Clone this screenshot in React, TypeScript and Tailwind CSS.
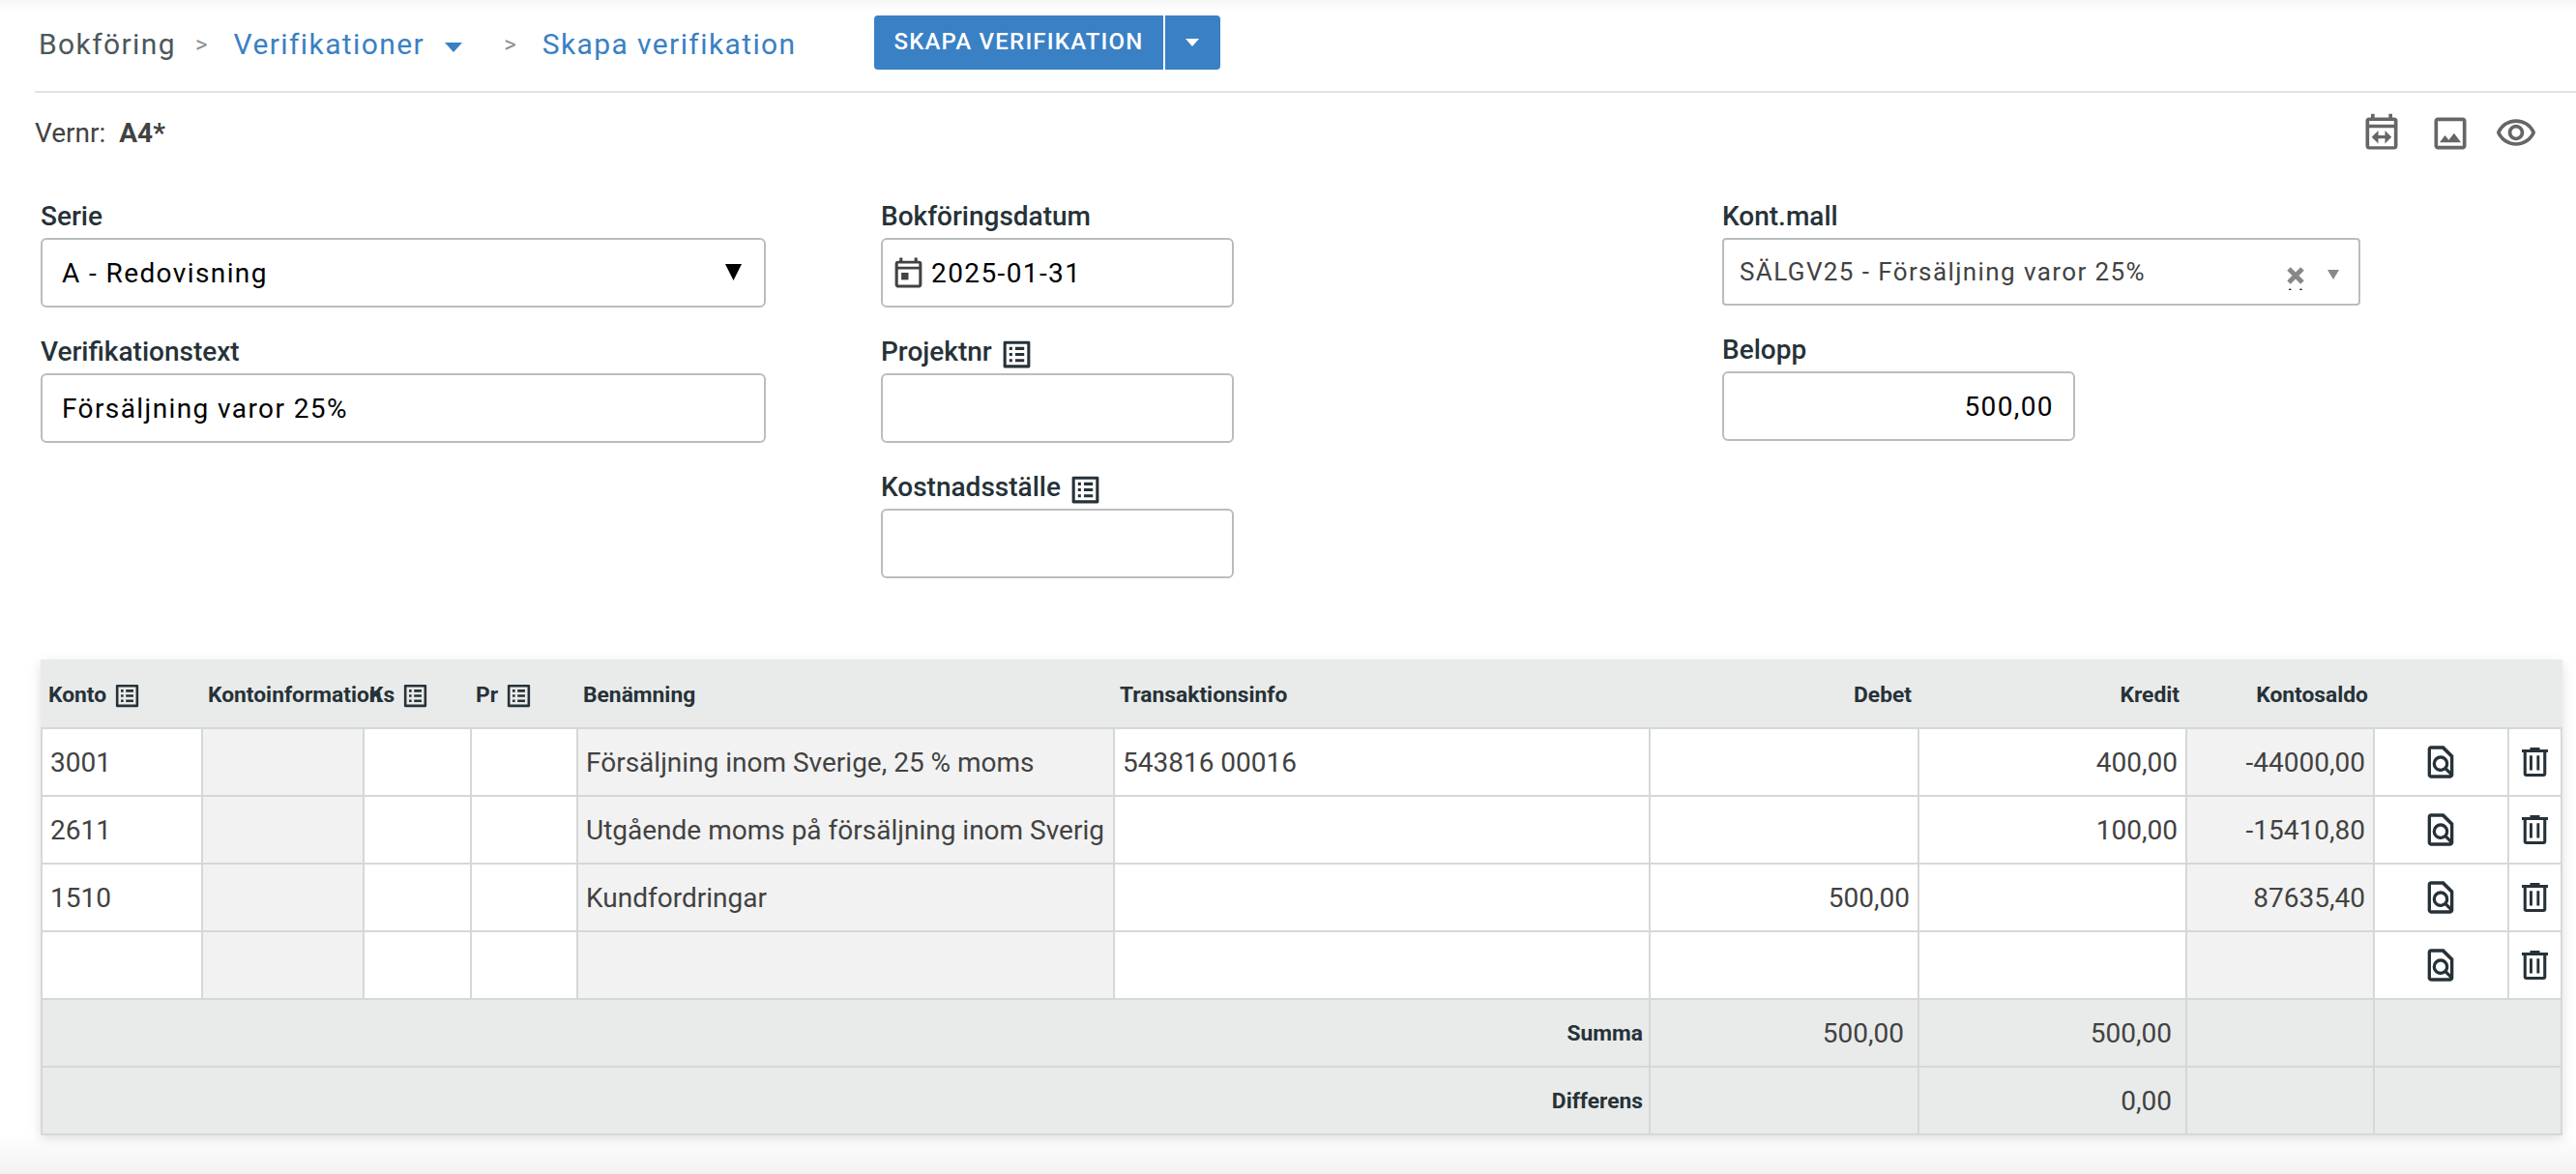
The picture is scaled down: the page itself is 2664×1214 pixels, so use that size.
import { type ReactNode } from "react";
import { MdOutlineFindInPage, MdOutlineImage, MdOutlineListAlt, MdOutlineVisibility } from "react-icons/md";

type Row = {
  konto: string;
  name: string;
  info: string;
  debet: string;
  kredit: string;
  saldo: string;
};

const rows: Row[] = [
  { konto: "3001", name: "Försäljning inom Sverige, 25 % moms", info: "543816 00016", debet: "", kredit: "400,00", saldo: "-44000,00" },
  { konto: "2611", name: "Utgående moms på försäljning inom Sverig", info: "", debet: "", kredit: "100,00", saldo: "-15410,80" },
  { konto: "1510", name: "Kundfordringar", info: "", debet: "500,00", kredit: "", saldo: "87635,40" },
  { konto: "", name: "", info: "", debet: "", kredit: "", saldo: "" },
];

const columns = "grid grid-cols-[168px_167px_111px_110px_555px_554px_278px_277px_194px_139px_55px]";

function CalendarIcon({ range = false, className }: { range?: boolean; className?: string }) {
  return (
    <svg viewBox="0 0 24 24" fill="currentColor" fillRule="evenodd" className={className}>
      <path d="M18 3V1h-2v2H8V1H6v2H5a2 2 0 0 0-2 2v14a2 2 0 0 0 2 2h14a2 2 0 0 0 2-2V5a2 2 0 0 0-2-2ZM5 4.900h14v2H5ZM5 8.800h14V19.200H5Z" />
      {range ? (
        <path d="M6.400 14l3.700-3.700v2.800h3.800v-2.800l3.700 3.700-3.700 3.700v-2.800h-3.800v2.800Z" />
      ) : (
        <path d="M7.200 11H12v4.800H7.200z" />
      )}
    </svg>
  );
}

function TrashIcon({ className }: { className?: string }) {
  return (
    <svg viewBox="0 0 27 30" fill="currentColor" fillRule="evenodd" className={className}>
      <path d="M8.500 0h10v2H27v3h-1.700v22a3 3 0 0 1-3 3H4.700a3 3 0 0 1-3-3V5H0V2h8.500ZM4.800 5v22h17.400V5Z" />
      <path d="M8 8.200h2.900v15.300H8zM15.400 8.200h2.900v15.300h-2.900z" />
    </svg>
  );
}

function Caret({ className }: { className?: string }) {
  return (
    <svg viewBox="0 0 10 6" preserveAspectRatio="none" fill="currentColor" className={className}>
      <path d="M0 0h10L5 6z" />
    </svg>
  );
}

function Field({ label, list, children }: { label: string; list?: boolean; children: ReactNode }) {
  return (
    <div className="flex flex-col">
      <div className="flex h-[46px] items-center pt-[2px] text-[28px] leading-none font-medium text-[#263238]">
        {label}
        {list && <MdOutlineListAlt className="mt-1 ml-[7px] size-[37px]" />}
      </div>
      {children}
    </div>
  );
}

function ListHead({ children, className = "pl-[5px]" }: { children: string; className?: string }) {
  return (
    <div className={`flex items-center ${className}`}>
      {children}
      <MdOutlineListAlt className="mt-[2px] ml-[6px] size-[31px]" />
    </div>
  );
}

const box = "flex h-[72px] items-center rounded-[6px] border-2 border-[#babdbf] bg-white pt-[2px] text-[28px] tracking-[1.400px] text-black";
const cell = "flex items-center border-r-2 border-[#d6d7d7] px-2 pt-[2px] whitespace-nowrap";
const iconCell = "flex items-center justify-center border-r-2 border-[#d6d7d7] pr-[1px] text-[#263238]";

export default function App() {
  return (
    <main className="h-[1214px] w-[2664px] overflow-hidden bg-white font-['Roboto',sans-serif] text-[#424242]">
      <div className="h-3 bg-linear-to-b from-[#f7f7f7] to-white" />
      <header className="ml-9 flex h-[84px] items-start border-b-2 border-[#e2e2e2] pl-1">
        <nav className="flex h-[68px] w-[864px] items-center text-[30px] leading-[34px] tracking-[1.400px] text-[#3a80c4]">
          <span className="text-[#4d575c]">Bokföring</span>
          <span className="ml-[20px] text-[24px] tracking-normal text-[#8d9093]">&gt;</span>
          <a className="ml-[27px]">Verifikationer</a>
          <Caret className="mt-[6px] ml-[21px] h-[10px] w-[18px]" />
          <span className="ml-[43px] text-[24px] tracking-normal text-[#8d9093]">&gt;</span>
          <a className="ml-[27px]">Skapa verifikation</a>
        </nav>
        <div className="mt-1 flex h-14 gap-[2px] text-white">
          <button className="w-[299px] rounded-l-[4px] bg-[#3a80c4] pb-[2px] text-[24px] font-medium tracking-[1.200px]">SKAPA VERIFIKATION</button>
          <button className="flex w-[57px] items-center justify-center rounded-r-[4px] bg-[#3a80c4] pr-[2px]">
            <Caret className="h-[8px] w-[14px]" />
          </button>
        </div>
      </header>

      <div className="ml-9 flex h-[104px] justify-between pr-10">
        <p className="mt-[22px] text-[28px] leading-10">
          Vernr: <b className="ml-[7px]">A4*</b>
        </p>
        <div className="mt-5 flex h-11 items-center text-[#666]">
          <CalendarIcon range className="size-11" />
          <MdOutlineImage className="ml-[27px] size-11" />
          <MdOutlineVisibility className="ml-6 size-11" />
        </div>
      </div>

      <section className="ml-[42px] flex h-[482px]">
        <div className="flex w-[869px] flex-col gap-[22px]">
          <Field label="Serie">
            <div className={`${box} w-[750px] justify-between pr-[23px] pl-5`}>
              A - Redovisning
              <Caret className="mb-[3px] size-[17px]" />
            </div>
          </Field>
          <Field label="Verifikationstext">
            <div className={`${box} w-[750px] pl-5`}>Försäljning varor 25%</div>
          </Field>
        </div>
        <div className="flex w-[870px] flex-col gap-[22px]">
          <Field label="Bokföringsdatum">
            <div className={`${box} w-[365px] pl-2`}>
              <CalendarIcon className="mr-[5px] size-[37px] text-[#424242]" />
              2025-01-31
            </div>
          </Field>
          <Field label="Projektnr" list>
            <div className={`${box} w-[365px]`} />
          </Field>
          <Field label="Kostnadsställe" list>
            <div className={`${box} w-[365px]`} />
          </Field>
        </div>
        <div className="flex flex-col gap-[22px]">
          <Field label="Kont.mall">
            <div className="flex h-[70px] w-[660px] items-center rounded-[4px] border-2 border-[#babdbf] pr-5 pl-4 text-[26px] tracking-[1.400px]">
              <span className="grow">SÄLGV25 - Försäljning varor 25%</span>
              <svg viewBox="0 0 18 25" className="mt-[15px] h-[25px] w-[18px] text-[#888]">
                <path d="M2 2l14 14M16 2L2 16" stroke="currentColor" strokeWidth="5" />
                <path d="M1.500 24l1.700-2 1.700 2zM12.800 24l1.700-2 1.700 2z" fill="#333" />
              </svg>
              <Caret className="mt-[6px] ml-6 h-[10px] w-3 text-[#888]" />
            </div>
          </Field>
          <Field label="Belopp">
            <div className={`${box} w-[365px] justify-end pr-5`}>500,00</div>
          </Field>
        </div>
      </section>

      <section className="ml-[42px] w-[2608px] text-[28px] shadow-[0_4px_12px_rgba(0,0,0,0.13)]">
        <div className={`${columns} h-[72px] border-b-2 border-[#d6d7d7] bg-[#e9ebea] pt-[3px] text-[22.800px] leading-[26px] font-bold text-[#263238]`}>
          <ListHead className="pl-2">Konto</ListHead>
          <div className="flex items-center pl-[5px]">Kontoinformation</div>
          <ListHead>Ks</ListHead>
          <ListHead className="pl-1">Pr</ListHead>
          <div className="flex items-center pl-[5px]">Benämning</div>
          <div className="flex items-center pl-[5px]">Transaktionsinfo</div>
          <div className="flex items-center justify-end pr-2">Debet</div>
          <div className="flex items-center justify-end pr-2">Kredit</div>
          <div className="flex items-center justify-end pr-[7px]">Kontosaldo</div>
        </div>
        {rows.map((r, i) => (
          <div key={i} className={`${columns} h-[70px] border-b-2 border-[#d6d7d7] bg-white`}>
            <div className={`${cell} border-l-2`}>{r.konto}</div>
            <div className={`${cell} bg-[#f2f2f2]`} />
            <div className={cell} />
            <div className={cell} />
            <div className={`${cell} bg-[#f2f2f2]`}>{r.name}</div>
            <div className={cell}>{r.info}</div>
            <div className={`${cell} justify-end`}>{r.debet}</div>
            <div className={`${cell} justify-end`}>{r.kredit}</div>
            <div className={`${cell} justify-end bg-[#f2f2f2]`}>{r.saldo}</div>
            <div className={iconCell}>
              <MdOutlineFindInPage className="size-10" />
            </div>
            <div className={iconCell}>
              <TrashIcon className="h-[30px] w-[27px]" />
            </div>
          </div>
        ))}
        {[
          ["Summa", "500,00", "500,00"],
          ["Differens", "", "0,00"],
        ].map(([label, debet, kredit]) => (
          <div key={label} className="grid h-[70px] grid-cols-[1665px_278px_277px_194px_194px] border-b-2 border-[#d6d7d7] bg-[#e9ebea]">
            <div className={`${cell} justify-end border-l-2 pr-[6px] text-[22.800px] font-bold text-[#263238]`}>{label}</div>
            <div className={`${cell} justify-end pr-[14px]`}>{debet}</div>
            <div className={`${cell} justify-end pr-[14px]`}>{kredit}</div>
            <div className={cell} />
            <div className={cell} />
          </div>
        ))}
      </section>
      <div className="h-10 bg-linear-to-b from-transparent to-[#f2f2f2]" />
    </main>
  );
}
